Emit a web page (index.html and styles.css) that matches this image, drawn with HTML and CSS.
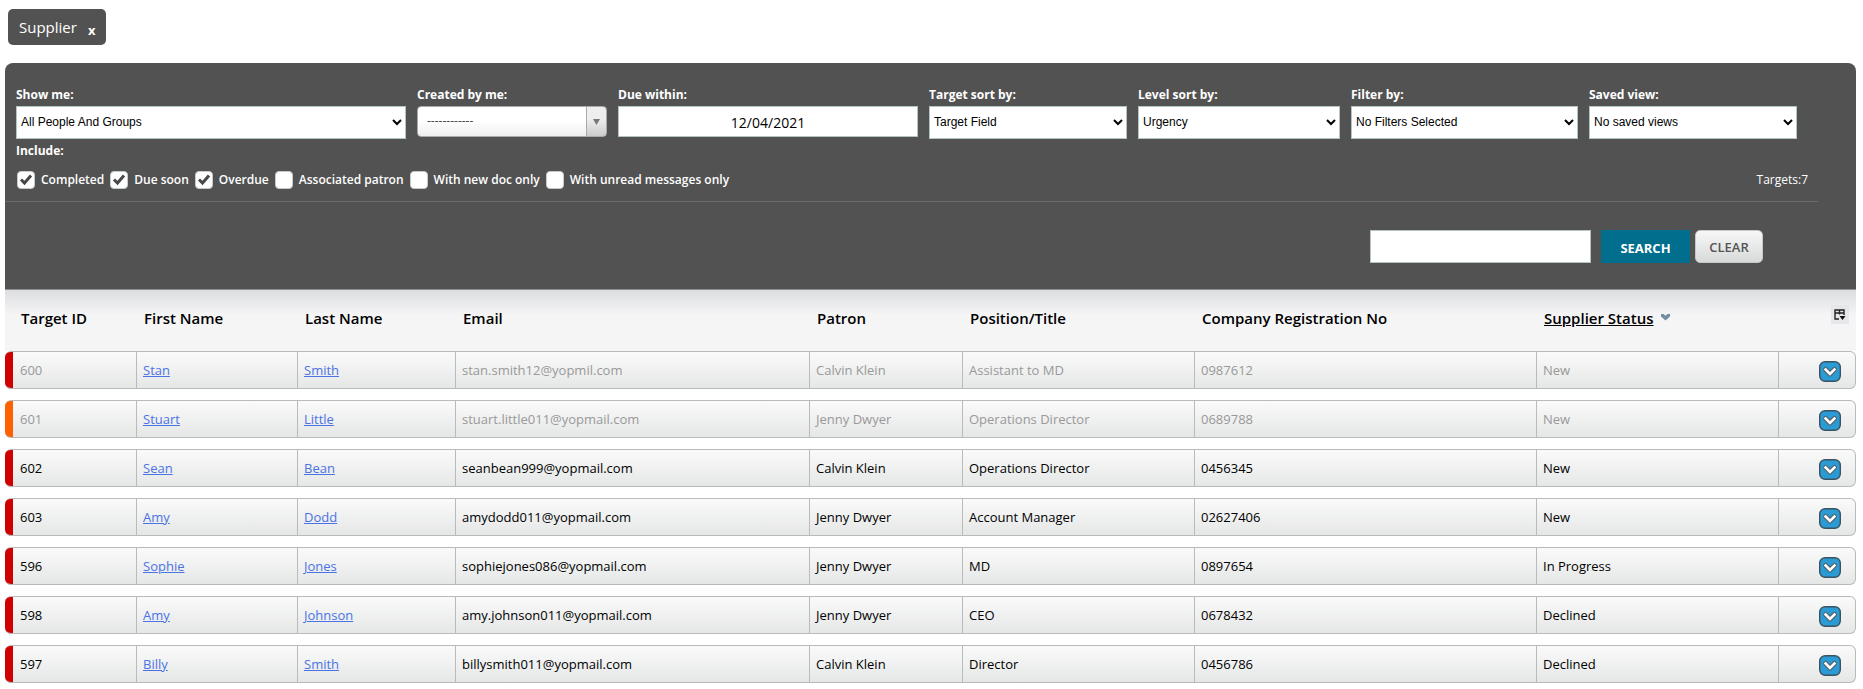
FILE: index.html
```html
<!DOCTYPE html>
<html lang="en">
<head>
<meta charset="utf-8">
<title>Supplier</title>
<link rel="stylesheet" href="styles.css">
</head>
<body>
<svg class="sprite" width="0" height="0" aria-hidden="true">
  <symbol id="row-menu" viewBox="0 0 22 21">
    <rect x="0.7" y="0.7" width="20.6" height="19.6" rx="5.5" fill="#2a9bd5" stroke="#3b5360" stroke-width="1.4"/>
    <path d="M6.6 8.5L11 12.9L15.4 8.5" fill="none" stroke="#4f6673" stroke-width="5.2" stroke-linecap="round" stroke-linejoin="round"/>
    <path d="M6.6 8.5L11 12.9L15.4 8.5" fill="none" stroke="#fff" stroke-width="2.6" stroke-linecap="square"/>
  </symbol>
</svg>

<div class="tabs">
  <div class="tab"><span>Supplier</span><button class="tab-close" aria-label="Close Supplier">x</button></div>
</div>

<main class="board">
  <form class="panel">
    <div class="filters">
      <div class="field field-people"><label for="people">Show me:</label><select id="people"><option>All People And Groups</option></select></div>
      <div class="field field-created"><label for="created">Created by me:</label><select id="created" class="combo"><option>------------</option></select></div>
      <div class="field field-due"><label for="due">Due within:</label><input id="due" type="text" value="12/04/2021"></div>
      <div class="field field-target"><label for="target">Target sort by:</label><select id="target"><option>Target Field</option></select></div>
      <div class="field field-level"><label for="level">Level sort by:</label><select id="level"><option>Urgency</option></select></div>
      <div class="field field-filter"><label for="filter">Filter by:</label><select id="filter"><option>No Filters Selected</option></select></div>
      <div class="field field-saved"><label for="saved">Saved view:</label><select id="saved"><option>No saved views</option></select></div>
    </div>
    <div class="include-title">Include:</div>
    <div class="include">
      <div class="checks">
        <label class="check"><input type="checkbox" checked><span>Completed</span></label>
        <label class="check"><input type="checkbox" checked><span>Due soon</span></label>
        <label class="check"><input type="checkbox" checked><span>Overdue</span></label>
        <label class="check"><input type="checkbox"><span>Associated patron</span></label>
        <label class="check"><input type="checkbox"><span>With new doc only</span></label>
        <label class="check"><input type="checkbox"><span>With unread messages only</span></label>
      </div>
      <div class="count">Targets:7</div>
    </div>
    <div class="search">
      <input class="search-box" type="text" aria-label="Search targets">
      <button class="search-btn" type="button">SEARCH</button>
      <button class="clear-btn" type="button">CLEAR</button>
    </div>
  </form>

  <div class="list">
    <table class="targets">
      <colgroup><col class="c-id"><col class="c-first"><col class="c-last"><col class="c-email"><col class="c-patron"><col class="c-title"><col class="c-reg"><col class="c-status"><col class="c-menu"></colgroup>
      <thead>
        <tr>
          <th>Target ID</th><th>First Name</th><th>Last Name</th><th>Email</th><th>Patron</th><th>Position/Title</th><th>Company Registration No</th>
          <th><span class="sorted">Supplier Status</span><svg class="sort-icon" width="9" height="7" viewBox="0 0 9 7" aria-hidden="true"><path d="M0 0H2.5L4.5 1.8L6.5 0H9V2.5L4.5 6.5L0 2.5Z" fill="#708fa0"/></svg></th>
          <th class="tools"><button class="columns" aria-label="Choose columns"><svg width="12" height="12" viewBox="0 0 12 12" aria-hidden="true"><path d="M5 10H1V1H10V6M1 4H10M5.5 1V5.5" fill="none" stroke="#222" stroke-width="1.4"/><path d="M5.5 7H11.5L8.5 11Z" fill="#111"/></svg></button></th>
        </tr>
      </thead>
      <tbody>
        <tr class="muted"><td>600</td><td><a href="#">Stan</a></td><td><a href="#">Smith</a></td><td>stan.smith12@yopmil.com</td><td>Calvin Klein</td><td>Assistant to MD</td><td>0987612</td><td>New</td><td class="menu"><button aria-label="Actions"><svg><use href="#row-menu"/></svg></button></td></tr>
        <tr class="muted soon"><td>601</td><td><a href="#">Stuart</a></td><td><a href="#">Little</a></td><td>stuart.little011@yopmail.com</td><td>Jenny Dwyer</td><td>Operations Director</td><td>0689788</td><td>New</td><td class="menu"><button aria-label="Actions"><svg><use href="#row-menu"/></svg></button></td></tr>
        <tr><td>602</td><td><a href="#">Sean</a></td><td><a href="#">Bean</a></td><td>seanbean999@yopmail.com</td><td>Calvin Klein</td><td>Operations Director</td><td>0456345</td><td>New</td><td class="menu"><button aria-label="Actions"><svg><use href="#row-menu"/></svg></button></td></tr>
        <tr><td>603</td><td><a href="#">Amy</a></td><td><a href="#">Dodd</a></td><td>amydodd011@yopmail.com</td><td>Jenny Dwyer</td><td>Account Manager</td><td>02627406</td><td>New</td><td class="menu"><button aria-label="Actions"><svg><use href="#row-menu"/></svg></button></td></tr>
        <tr><td>596</td><td><a href="#">Sophie</a></td><td><a href="#">Jones</a></td><td>sophiejones086@yopmail.com</td><td>Jenny Dwyer</td><td>MD</td><td>0897654</td><td>In Progress</td><td class="menu"><button aria-label="Actions"><svg><use href="#row-menu"/></svg></button></td></tr>
        <tr><td>598</td><td><a href="#">Amy</a></td><td><a href="#">Johnson</a></td><td>amy.johnson011@yopmail.com</td><td>Jenny Dwyer</td><td>CEO</td><td>0678432</td><td>Declined</td><td class="menu"><button aria-label="Actions"><svg><use href="#row-menu"/></svg></button></td></tr>
        <tr><td>597</td><td><a href="#">Billy</a></td><td><a href="#">Smith</a></td><td>billysmith011@yopmail.com</td><td>Calvin Klein</td><td>Director</td><td>0456786</td><td>Declined</td><td class="menu"><button aria-label="Actions"><svg><use href="#row-menu"/></svg></button></td></tr>
      </tbody>
    </table>
  </div>
</main>
</body>
</html>
```
FILE: styles.css
```css
* { box-sizing: border-box; }

body {
  margin: 0;
  padding: 9px 7px 0 5px;
  background: #fff;
  color: #000;
  font: 13px/18px "Open Sans", "Noto Sans", sans-serif;
}

.sprite { display: block; }
button { font-family: inherit; border: 0; cursor: pointer; }

/* Tabs */
.tabs { display: flex; padding: 0 3px; }
.tab {
  display: flex;
  align-items: center;
  gap: 11px;
  height: 36px;
  padding: 0 11px;
  border-radius: 5px;
  background: #525252;
  color: #fff;
  font-size: 15px;
}
.tab-close {
  padding: 5px 0 0;
  background: none;
  color: #fff;
  font-size: 13px;
  font-weight: 700;
  line-height: 16px;
}

/* Filter panel */
.board { margin-top: 18px; }
.panel {
  padding: 23px 0 26px;
  border-radius: 8px 8px 0 0;
  border-bottom: 1px solid #8e8e8e;
  background: #525252;
  color: #fff;
}
.filters {
  display: flex;
  align-items: flex-start;
  gap: 11px;
  padding: 0 59px 0 11px;
}
.field { display: flex; flex-direction: column; gap: 2px; min-width: 0; }
.field label, .include-title { font-size: 12px; font-weight: 700; }
.field-people { flex: 390 1 0; }
.field-created { flex: 190 1 0; }
.field-due { flex: 300 1 0; }
.field-target { flex: 198 1 0; }
.field-level { flex: 202 1 0; }
.field-filter { flex: 227 1 0; }
.field-saved { flex: 208 1 0; }

select, input[type="text"] {
  width: 100%;
  height: 33px;
  border: 1px solid #b2c4c4;
  border-radius: 0;
  background-color: #fff;
  color: #000;
}
select { padding-bottom: 2px; font: 12px "Liberation Sans", Arial, sans-serif; }
.field input[type="text"] {
  height: 31px;
  padding-top: 3px;
  font: 14px "Open Sans", sans-serif;
  text-align: center;
}
.field .combo {
  height: 31px;
  padding: 0 24px 2px 9px;
  border-color: #aaa;
  border-radius: 4px;
  appearance: none;
  font-family: "Open Sans", sans-serif;
  color: #444;
  background:
    url("data:image/svg+xml,%3Csvg xmlns='http://www.w3.org/2000/svg' width='7' height='6'%3E%3Cpath d='M0 0H7L3.5 6Z' fill='%23777'/%3E%3C/svg%3E") right 6px center no-repeat,
    linear-gradient(#aaa, #aaa) right 19px top / 1px 100% no-repeat,
    linear-gradient(#eee 40%, #ccc) right top / 19px 100% no-repeat,
    linear-gradient(#fff 50%, #eee);
}

.include-title { padding: 3px 11px 0; }
.include {
  display: flex;
  justify-content: space-between;
  align-items: center;
  margin-right: 38px;
  padding: 10px 10px 12px 12px;
  border-bottom: 1px solid #6b6b6b;
}
.count { font-size: 12px; }
.checks { display: flex; gap: 6px; }
.check { display: flex; align-items: center; gap: 6px; font-size: 12px; font-weight: 600; }
.check span { padding-top: 1px; }
.check input {
  width: 18px;
  height: 18px;
  margin: 0;
  appearance: none;
  border: 1px solid #c4cccc;
  border-radius: 4px;
  background: #fff;
}
.check input:checked {
  background: #fff url("data:image/svg+xml,%3Csvg xmlns='http://www.w3.org/2000/svg' width='14' height='13'%3E%3Cpath d='M2 6.5L5.5 10L12 2.5' fill='none' stroke='%23484848' stroke-width='3'/%3E%3C/svg%3E") center no-repeat;
}

.search {
  display: flex;
  justify-content: flex-end;
  padding: 28px 93px 0 0;
}
.search input.search-box { width: 221px; }
.search-btn {
  width: 89px;
  margin: 0 5px 0 10px;
  padding: 3px 0 0;
  background: #006e8c;
  color: #fff;
  font-size: 13px;
  font-weight: 700;
}
.clear-btn {
  width: 68px;
  border: 1px solid #c4c8c8;
  border-radius: 5px;
  background: linear-gradient(#f7f7f7, #d8dada);
  color: #555;
  font-size: 13px;
  font-weight: 600;
}

/* Target list: the header shading reaches down to the first row */
.list { background: linear-gradient(#dcdde0, #f5f5f6 25px, #f5f5f5) top / 100% 61px no-repeat; }
.targets {
  width: 100%;
  table-layout: fixed;
  border-collapse: separate;
  border-spacing: 0 11px;
}
.c-id { width: 132px; }
.c-first { width: 161px; }
.c-last { width: 158px; }
.c-email { width: 354px; }
.c-patron { width: 153px; }
.c-title { width: 232px; }
.c-reg { width: 342px; }
.c-status { width: 242px; }
.c-menu { width: 77px; }

th {
  height: 39px;
  padding: 8px 0 0 7px;
  font-size: 15px;
  font-weight: 600;
  text-align: left;
  vertical-align: top;
  white-space: nowrap;
}
th:first-child { padding-left: 16px; }
.sorted { text-decoration: underline; }
.sort-icon { margin-left: 8px; vertical-align: 3px; }
.targets .tools { padding: 4px 7px 0 0; text-align: right; }
.columns {
  display: inline-grid;
  place-items: center;
  width: 18px;
  height: 19px;
  padding: 0;
  background: #e6e7ea;
}

td {
  height: 38px;
  padding: 0 0 0 6px;
  border: 1px solid #b9bbbb;
  border-left: 0;
  background: linear-gradient(#fafafa, #e5e7e6);
  overflow: hidden;
  white-space: nowrap;
}
td:first-child {
  padding-left: 15px;
  border-radius: 6px 0 0 6px;
  background:
    linear-gradient(#d10000, #d10000) left / 8px 100% no-repeat border-box,
    linear-gradient(#fafafa, #e5e7e6);
}
.soon td:first-child {
  background:
    linear-gradient(#ff6000, #ff6000) left / 8px 100% no-repeat border-box,
    linear-gradient(#fafafa, #e5e7e6);
}
td:last-child { border-radius: 0 6px 6px 0; }
.muted { color: #999; }
td a { color: #4b73e6; }
.menu { padding: 3px 14px 0 0; text-align: right; }
.menu button { padding: 0; background: none; vertical-align: middle; }
.menu svg { display: block; width: 22px; height: 21px; }
```
